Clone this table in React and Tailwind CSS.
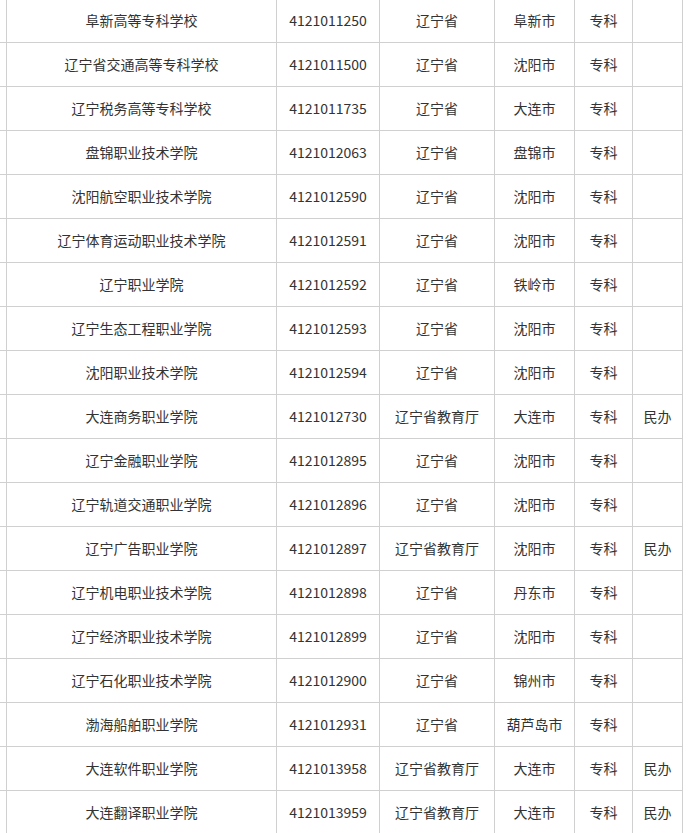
import React from "react";

const rows = [
  ["阜新高等专科学校", "4121011250", "辽宁省", "阜新市", "专科", ""],
  ["辽宁省交通高等专科学校", "4121011500", "辽宁省", "沈阳市", "专科", ""],
  ["辽宁税务高等专科学校", "4121011735", "辽宁省", "大连市", "专科", ""],
  ["盘锦职业技术学院", "4121012063", "辽宁省", "盘锦市", "专科", ""],
  ["沈阳航空职业技术学院", "4121012590", "辽宁省", "沈阳市", "专科", ""],
  ["辽宁体育运动职业技术学院", "4121012591", "辽宁省", "沈阳市", "专科", ""],
  ["辽宁职业学院", "4121012592", "辽宁省", "铁岭市", "专科", ""],
  ["辽宁生态工程职业学院", "4121012593", "辽宁省", "沈阳市", "专科", ""],
  ["沈阳职业技术学院", "4121012594", "辽宁省", "沈阳市", "专科", ""],
  ["大连商务职业学院", "4121012730", "辽宁省教育厅", "大连市", "专科", "民办"],
  ["辽宁金融职业学院", "4121012895", "辽宁省", "沈阳市", "专科", ""],
  ["辽宁轨道交通职业学院", "4121012896", "辽宁省", "沈阳市", "专科", ""],
  ["辽宁广告职业学院", "4121012897", "辽宁省教育厅", "沈阳市", "专科", "民办"],
  ["辽宁机电职业技术学院", "4121012898", "辽宁省", "丹东市", "专科", ""],
  ["辽宁经济职业技术学院", "4121012899", "辽宁省", "沈阳市", "专科", ""],
  ["辽宁石化职业技术学院", "4121012900", "辽宁省", "锦州市", "专科", ""],
  ["渤海船舶职业学院", "4121012931", "辽宁省", "葫芦岛市", "专科", ""],
  ["大连软件职业学院", "4121013958", "辽宁省教育厅", "大连市", "专科", "民办"],
  ["大连翻译职业学院", "4121013959", "辽宁省教育厅", "大连市", "专科", "民办"],
];

const cell = "flex items-center justify-center border-r border-[#d0d0d0] h-full";

export default function App() {
  return (
    <div
      className="w-[688px] h-[833px] overflow-hidden bg-white text-[14px] text-[#333]"
      style={{ fontFamily: '"Noto Sans CJK SC", "Noto Sans", sans-serif' }}
    >
      <div className="w-[683px] -mt-[1px]">
        {rows.map((r) => (
          <div key={r[1]} className="flex h-[44px] border-b border-[#d0d0d0]">
            <div className={`${cell} w-[7px]`}></div>
            <div className={`${cell} w-[270px]`}>{r[0]}</div>
            <div className={`${cell} w-[103px]`}>{r[1]}</div>
            <div className={`${cell} w-[115px]`}>{r[2]}</div>
            <div className={`${cell} w-[80px]`}>{r[3]}</div>
            <div className={`${cell} w-[58px]`}>{r[4]}</div>
            <div className={`${cell} w-[50px]`}>{r[5]}</div>
          </div>
        ))}
      </div>
    </div>
  );
}
